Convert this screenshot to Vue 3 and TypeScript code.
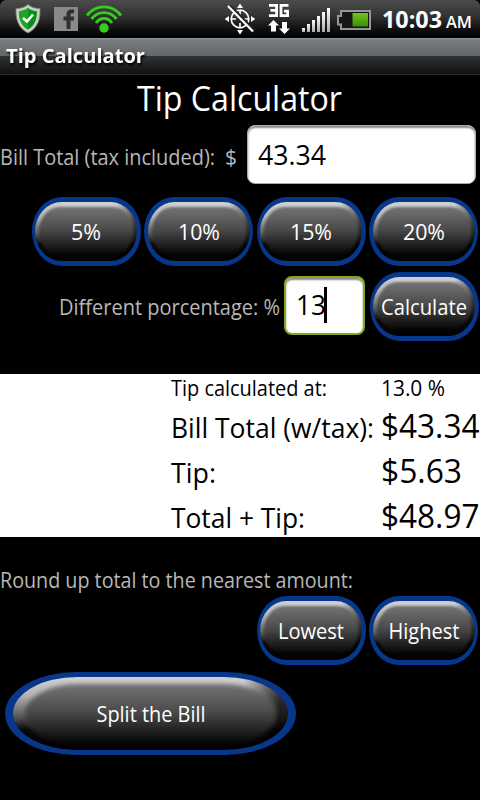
<script setup lang="ts">
import { h, ref, computed } from 'vue'

interface FitProps { text: string; w: number; size: number }

// Text set to an exact advance width; the baseline sits `size` pixels below the top.
const Fit = (p: FitProps) =>
  h('svg', { width: p.w, height: p.size + 6, overflow: 'visible' }, [
    h('text', { x: 0, y: p.size, textLength: p.w, lengthAdjust: 'spacingAndGlyphs', 'font-size': p.size, fill: 'currentColor' }, p.text),
  ])
Fit.props = ['text', 'w', 'size']

const bill = ref(43.34)
const percent = ref(13)
const tip = computed(() => bill.value * percent.value / 100)
const money = (n: number) => '$' + n.toFixed(2)

const presets = [
  { text: '5%', w: 30 },
  { text: '10%', w: 42 },
  { text: '15%', w: 42 },
  { text: '20%', w: 42 },
]
const rounding = [
  { text: 'Lowest', w: 66 },
  { text: 'Highest', w: 71 },
]
const bars = [4, 8, 12, 16, 20, 24]
</script>

<template>
  <div class="phone">
    <header class="status">
      <svg class="shield" width="28" height="32" viewBox="0 0 28 32">
        <path d="M14 1.500 C17.500 4.500 21.500 5.500 26 5.500 C26.500 16 24 25 14 30 C4 25 1.500 16 2 5.500 C6.500 5.500 10.500 4.500 14 1.500Z" fill="#c6d0c6" stroke="#74806f" stroke-width=".8" />
        <path d="M14 5 C17 7.200 20 8 23 8.200 C23 16 21 22.500 14 26.500 C7 22.500 5 16 5 8.200 C8 8 11 7.200 14 5Z" fill="#09901a" />
        <path d="M14 5 C11 7.200 8 8 5 8.200 C5 16 7 22.500 14 26.500Z" fill="#1fa428" />
        <path d="M9 15 L13 18.500 L19 11.500" fill="none" stroke="#fff" stroke-width="2.600" />
      </svg>
      <svg class="facebook" width="24" height="24" viewBox="0 0 24 24">
        <rect width="24" height="24" fill="#898989" />
        <path d="M12.500 22 V13.500 H9.500 V9.500 H12.500 V7.500 C12.500 4 14.500 2.500 17.500 2.500 H20 V6.300 H18.500 C17 6.300 16.500 6.800 16.500 8 V9.500 H20 V13.500 H16.500 V22Z" fill="#303030" />
      </svg>
      <svg class="wifi" width="38" height="30" viewBox="0 0 38 30" fill="none" stroke="#36cc20" stroke-width="2.900">
        <path d="M2 11.500 C11 0 27 0 36 11.500" />
        <path d="M6.500 15 C13 6.500 25 6.500 31.500 15" />
        <path d="M11 19 C15 13 23 13 27 19" />
        <circle cx="19" cy="24" r="4.700" fill="#36cc20" stroke="none" />
      </svg>
      <span class="spacer"></span>
      <svg class="gps" width="30" height="32" viewBox="0 0 30 32" fill="none" stroke="#fff" stroke-width="1.700">
        <circle cx="15" cy="16" r="8.800" />
        <path d="M15 7 V12 M15 20 V25 M6 16 H11 M19 16 H24" />
        <path d="M12 5 H18 L15 .5Z M12 27 H18 L15 31.500Z M4 13 V19 L-.5 16Z M26 13 V19 L30.500 16Z" fill="#fff" stroke="none" />
        <path d="M5 3 L29.500 27.500" stroke="#222" stroke-width="3" />
        <path d="M3 3 L28 28.500" stroke-width="2.200" />
      </svg>
      <svg class="data" width="22" height="32" viewBox="0 0 22 32" fill="none" stroke="#fff" stroke-width="2.800">
        <path d="M1 2.400 H8.600 V12.600 H1 M2.500 7.400 H8.600 M20.500 2.400 H13 V12.600 H19.600 V8.200 H16" />
        <path d="M5.500 17 L11 22.500 H8 V28.500 H3 V22.500 H0Z M16.500 31 L22 25.500 H19 V19 H14 V25.500 H11Z" fill="#fff" stroke="none" />
      </svg>
      <div class="signal"><i v-for="b in bars" :key="b" :style="{ height: b + 'px' }"></i></div>
      <svg class="battery" width="34" height="20" viewBox="0 0 34 20">
        <defs>
          <linearGradient id="charge" x1="0" y1="0" x2="0" y2="1"><stop offset="0" stop-color="#72c51e" /><stop offset="1" stop-color="#3d8e05" /></linearGradient>
        </defs>
        <path d="M4 1 H33 V19 H4 V14.500 H1 V6 H4Z" fill="#161616" stroke="#969696" stroke-width="2" />
        <rect x="15.500" y="3" width="15.500" height="13.500" fill="url(#charge)" />
      </svg>
      <Fit class="clock" text="10:03" :w="60" :size="23" />
      <Fit class="ampm" text="AM" :w="26" :size="16" />
    </header>
    <div class="titlebar"><Fit text="Tip Calculator" :w="139" :size="20" /></div>

    <main>
      <h1><Fit text="Tip Calculator" :w="205" :size="34" /></h1>

      <section class="bill">
        <Fit class="bill-label" text="Bill Total (tax included):" :w="215" :size="22" />
        <Fit class="dollar" text="$" :w="12" :size="22" />
        <div class="field bill-field"><Fit :text="bill.toFixed(2)" :w="68" :size="27" /></div>
      </section>

      <section class="buttons">
        <button v-for="p in presets" :key="p.text" class="btn"><span class="bevel"><span class="face"></span></span><Fit class="caption" :text="p.text" :w="p.w" :size="22" /></button>
      </section>

      <section class="custom">
        <Fit class="custom-label" text="Different porcentage: %" :w="221" :size="22" />
        <div class="field percent-field"><Fit :text="String(percent)" :w="30" :size="27" /><span class="caret"></span></div>
        <button class="btn"><span class="bevel"><span class="face"></span></span><Fit class="caption" text="Calculate" :w="86" :size="22" /></button>
      </section>

      <section class="results">
        <Fit class="note" text="Tip calculated at:" :w="156" :size="22" />
        <Fit class="note" :text="percent.toFixed(1) + ' %'" :w="64" :size="22" />
        <Fit class="name" text="Bill Total (w/tax):" :w="203" :size="28" />
        <Fit :text="money(bill)" :w="98.500" :size="33" />
        <Fit class="name" text="Tip:" :w="45" :size="28" />
        <Fit :text="money(tip)" :w="81" :size="33" />
        <Fit class="name" text="Total + Tip:" :w="134" :size="28" />
        <Fit :text="money(bill + tip)" :w="98.500" :size="33" />
      </section>

      <Fit class="round-label" text="Round up total to the nearest amount:" :w="353" :size="22" />
      <section class="buttons rounding">
        <button v-for="r in rounding" :key="r.text" class="btn"><span class="bevel"><span class="face"></span></span><Fit class="caption" :text="r.text" :w="r.w" :size="22" /></button>
      </section>
      <button class="btn wide"><span class="bevel"><span class="face"></span></span><Fit class="caption" text="Split the Bill" :w="109" :size="22" /></button>
    </main>
  </div>
</template>

<style>
body { margin: 0; background: #000; }
</style>

<style scoped>
.phone { width: 480px; height: 800px; overflow: hidden; background: #000; color: #fff; font-family: "Open Sans", "Noto Sans", sans-serif; }
svg { display: block; flex: none; }
.status { height: 38px; display: flex; align-items: flex-start; background: linear-gradient(#4b4b4b, #343434 40%, #111 75%, #000); border-radius: 6px 6px 0 0; }
.shield { margin: 3px 0 0 14px; }
.facebook { margin: 7px 0 0 12px; }
.wifi { margin: 4px 0 0 7px; }
.spacer { flex: 1; }
.gps { margin: 3px 13px 0 0; }
.data { margin: 3px 12px 0 0; }
.signal { width: 28px; height: 24px; margin: 8px 7px 0 0; display: flex; align-items: flex-end; justify-content: space-between; }
.signal i { width: 3px; background: linear-gradient(#fff, #aaa); }
.battery { margin: 10px 11px 0 0; }
.clock { font-weight: 700; margin: 5px 4px 0 0; }
.ampm { font-weight: 600; margin: 12px 8px 0 0; }
.titlebar { height: 37px; box-sizing: border-box; padding: 5px 0 0 6px; font-weight: 700; background: linear-gradient(#989b9d 0, #7a7d80 2px, #626568 18px, #303234 18px, #101112 36px, #292929 36px); }
.titlebar svg { filter: drop-shadow(1px 2px 1px #000); }
h1 { height: 50px; margin: 0; padding: 2px 0 0 137px; box-sizing: border-box; font-weight: 400; }
.bill { height: 72px; display: flex; color: #b8b8b8; }
.bill-label { margin: 18px 0 0 0; }
.dollar { margin: 18px 0 0 10px; }
.field { box-sizing: border-box; height: 59px; border-radius: 8px; background: #fff; color: #000; border: 1px solid #aaa; box-shadow: inset 0 2px 2px #888; display: flex; }
.bill-field { width: 229px; margin-left: 10px; padding: 12px 0 0 10px; }
.buttons { display: flex; justify-content: flex-end; gap: 3.500px; padding-right: 2px; }
.btn { position: relative; flex: none; box-sizing: border-box; width: 109px; height: 69px; border: 0; margin: 0; padding: 5px 3.500px; background: #07368b; border-radius: 30px / 35px; display: block; color: #fff; font: inherit; }
.bevel { display: block; box-sizing: border-box; height: 100%; padding: 5px 4px; overflow: hidden; border-radius: 27px / 30px; background: linear-gradient(90deg, transparent 80%, #0009 98%), linear-gradient(#d2d2d2, #b4b4b4 25%, #555 55%, #090909 72%, #000); }
.face { display: block; height: 100%; border-radius: 22px / 26px; background: linear-gradient(#747474, #4b4b4b 45%, #111 88%, #000); filter: blur(1.200px); }
.caption { position: absolute; left: 50%; top: 21px; transform: translateX(-50%); }
.custom { height: 102px; margin-top: 6px; display: flex; color: #b8b8b8; }
.custom-label { margin: 21px 0 0 59px; }
.percent-field { width: 81px; margin: 4px 4.500px 0 4px; padding: 10px 0 0 10px; border: 2px solid #82a81c; }
.caret { width: 3px; height: 36px; margin: -1px 0 0 -2px; background: #000; }
.results { height: 163px; box-sizing: border-box; padding-left: 171px; display: grid; grid-template-columns: 210px 99px; grid-template-rows: 31px 45px 45px 42px; background: #fff; color: #000; }
.name { margin-top: 5px; }
.round-label { margin-top: 29px; color: #b8b8b8; }
.rounding { margin-top: 2px; }
.wide { width: 291px; height: 83px; margin: 7px 0 0 5px; padding: 5px 8px; border-radius: 72px / 42px; }
.wide .bevel { border-radius: 65px / 37px; padding: 7px 12px 5px; background: linear-gradient(90deg, transparent 84%, #000b 97%), linear-gradient(#d2d2d2, #b4b4b4 25%, #555 55%, #090909 72%, #000); }
.wide .face { border-radius: 54px / 30px; filter: blur(2px); }
.wide .caption { top: 28px; }
</style>
